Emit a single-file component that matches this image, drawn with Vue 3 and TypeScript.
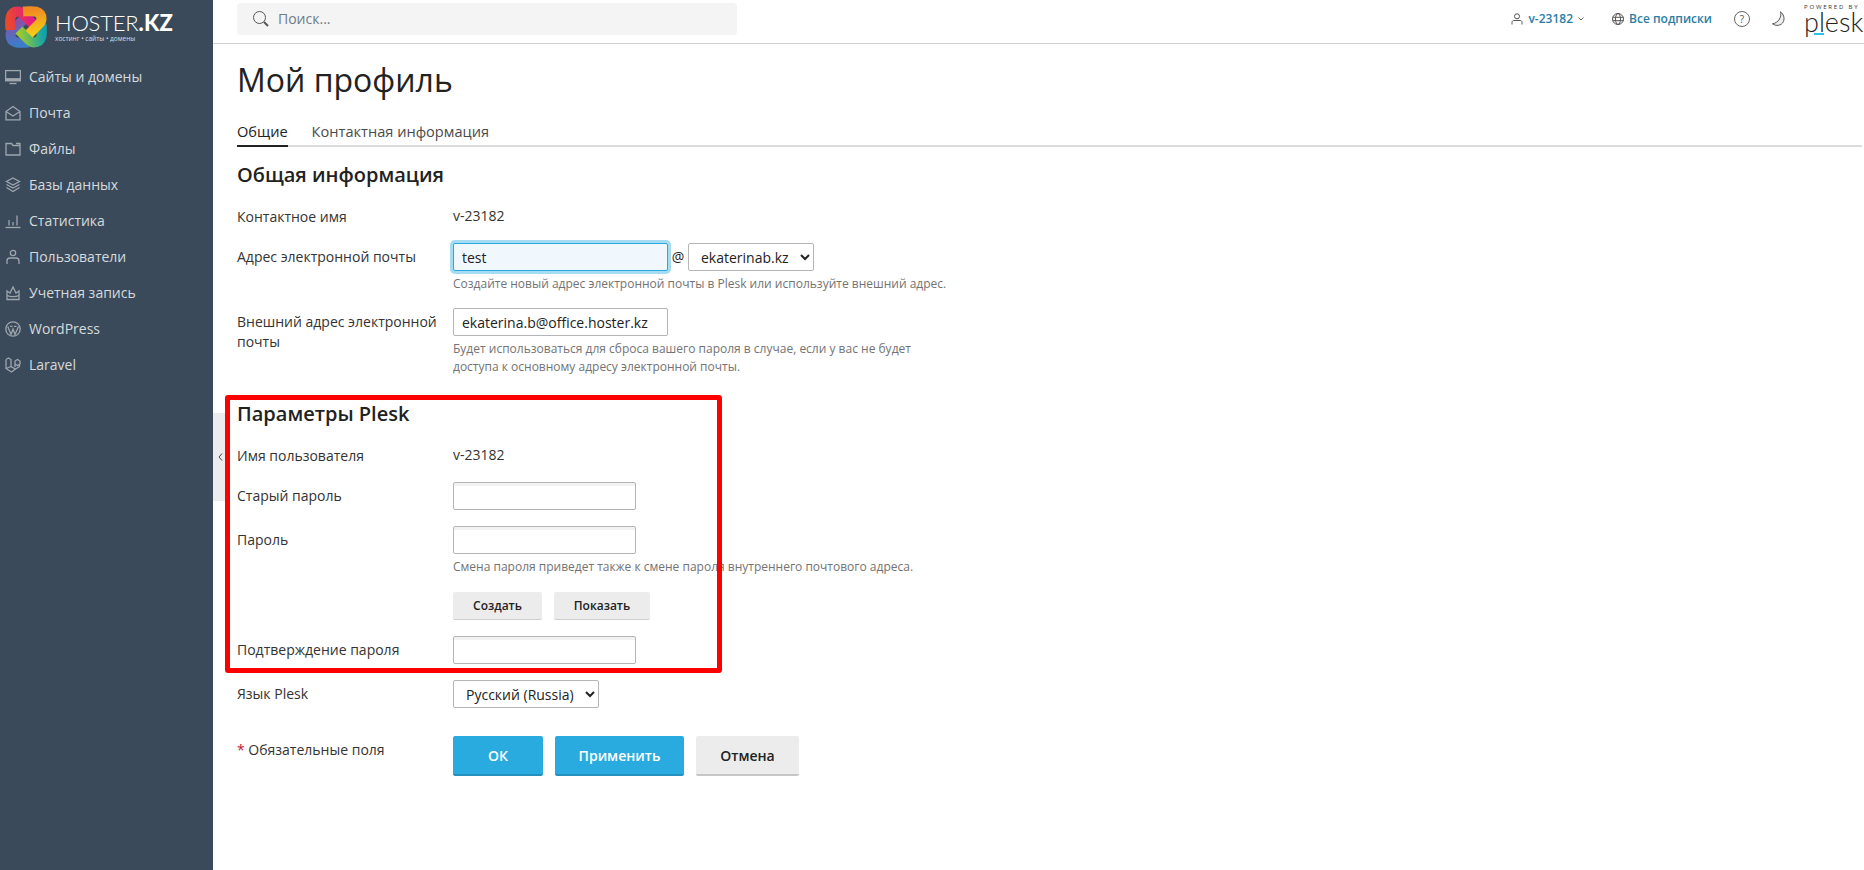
<script setup lang="ts">
import { ref } from 'vue'

const navItems: { label: string; icon: string }[] = [
  { label: 'Сайты и домены', icon: 'monitor' },
  { label: 'Почта', icon: 'mail' },
  { label: 'Файлы', icon: 'folder' },
  { label: 'Базы данных', icon: 'layers' },
  { label: 'Статистика', icon: 'chart' },
  { label: 'Пользователи', icon: 'user' },
  { label: 'Учетная запись', icon: 'crown' },
  { label: 'WordPress', icon: 'wp' },
  { label: 'Laravel', icon: 'laravel' },
]

const login = ref('test')
const externalMail = ref('ekaterina.b@office.hoster.kz')
const band = 'M18 5.500C26 5 36.500 3.500 36.500 13C36.500 15 35 17 34 18L24 28'
</script>

<template>
  <div class="page">
    <aside class="sidebar">
      <div class="brand">
        <svg class="brand-mark" viewBox="0 0 42 42" width="42" height="42">
          <defs>
            <linearGradient id="bandA" gradientUnits="userSpaceOnUse" x1="24" y1="4" x2="28" y2="28">
              <stop offset="0" stop-color="#ef8a22" />
              <stop offset="1" stop-color="#f8c915" />
            </linearGradient>
            <linearGradient id="bandB" gradientUnits="userSpaceOnUse" x1="24" y1="4" x2="28" y2="28">
              <stop offset="0" stop-color="#10a3ad" />
              <stop offset="1" stop-color="#9ccb2b" />
            </linearGradient>
            <linearGradient id="bandC" gradientUnits="userSpaceOnUse" x1="24" y1="4" x2="28" y2="28">
              <stop offset="0" stop-color="#3c7dcb" />
              <stop offset="1" stop-color="#8a4fa8" />
            </linearGradient>
            <linearGradient id="bandD" gradientUnits="userSpaceOnUse" x1="24" y1="4" x2="28" y2="28">
              <stop offset="0" stop-color="#e9482c" />
              <stop offset="1" stop-color="#e2188c" />
            </linearGradient>
          </defs>
          <g fill="none" stroke-width="10">
            <path :d="band" stroke="url(#bandC)" transform="rotate(180 21 21)" />
            <path :d="band" stroke="url(#bandB)" transform="rotate(90 21 21)" />
            <path :d="band" stroke="url(#bandD)" transform="rotate(270 21 21)" />
            <path :d="band" stroke="url(#bandA)" />
          </g>
        </svg>
        <div class="brand-text">
          <div class="brand-name">HOSTER<b>.KZ</b></div>
          <div class="brand-sub">хостинг • сайты • домены</div>
        </div>
      </div>
      <nav class="nav">
        <a v-for="item in navItems" :key="item.label" class="nav-item">
          <svg class="nav-icon" viewBox="0 0 16 16" width="16" height="16" fill="none" stroke="currentColor" stroke-width="1.300">
            <template v-if="item.icon === 'monitor'">
              <rect x="0.600" y="1.600" width="14.800" height="10" />
              <rect x="0.600" y="9.800" width="14.800" height="1.800" fill="currentColor" />
              <path d="M4.500 14.500h7" stroke-width="1.400" />
            </template>
            <template v-else-if="item.icon === 'mail'">
              <path d="M1 6.500L8 1.500L15 6.500V14.800H1Z" />
              <path d="M1 6.500L8 11L15 6.500" />
            </template>
            <template v-else-if="item.icon === 'folder'">
              <path d="M1 2.500H6.500L8 4.500H15V14H1Z" />
              <path d="M11 2.500H15V4" />
            </template>
            <template v-else-if="item.icon === 'layers'">
              <path d="M8 1L14.500 4.500L8 8L1.500 4.500Z" />
              <path d="M1.500 7.500L8 11L14.500 7.500" />
              <path d="M1.500 10.500L8 14.500L14.500 10.500" />
            </template>
            <template v-else-if="item.icon === 'chart'">
              <path d="M0.500 14.500H15.500" />
              <path d="M4 12.500V7M8 12.500V9M12 12.500V2.500" stroke-width="1.300" />
            </template>
            <template v-else-if="item.icon === 'user'">
              <circle cx="8" cy="4" r="2.700" />
              <path d="M2 15V12C2 10 3.500 9 5 9H11C12.500 9 14 10 14 12V15" />
            </template>
            <template v-else-if="item.icon === 'crown'">
              <path d="M2 6L5 8L8 2L11 8L14 6V14.500H2Z" />
              <path d="M2 10.500C5 12 11 12 14 10.500" />
            </template>
            <template v-else-if="item.icon === 'wp'">
              <circle cx="8" cy="8" r="7.200" />
              <path d="M2.800 5.500L6 13.500L8 8L10 13.500L13.500 5.500M5 5.300H7.500M9 5.300H11.500" />
            </template>
            <template v-else>
              <path d="M1 2.500L3.500 1L6 2.500V9.500L10.500 12L14.500 9.500V7" />
              <path d="M1 2.500V11.500L6.500 15L10.500 12M1 11.500L6 9.500" />
              <path d="M10 7L12.500 8.500L15 7V4L12.500 2.500L10 4ZM10 4V10" />
            </template>
          </svg>
          <span>{{ item.label }}</span>
        </a>
      </nav>
    </aside>

    <div class="workspace">
      <header class="topbar">
        <div class="search">
          <svg viewBox="0 0 16 16" width="16" height="16" fill="none" stroke="#555" stroke-width="1">
            <circle cx="6.500" cy="6.500" r="6" />
            <path d="M11 11L15 15" stroke-width="2" />
          </svg>
          <span>Поиск...</span>
        </div>
        <div class="top-actions">
          <a class="top-link user-link">
            <svg viewBox="0 0 12 12" width="12" height="12" fill="none" stroke="#555" stroke-width="1">
              <circle cx="6" cy="3.300" r="2.500" />
              <path d="M1 11.500V9.500C1 8 2 7.500 3 7.500H9C10 7.500 11 8 11 9.500V11.500" />
            </svg>
            <span>v-23182</span>
            <svg viewBox="0 0 6 4" width="6" height="4" fill="none" stroke="#666" stroke-width="1"><path d="M0.500 0.500L3 3L5.500 0.500" /></svg>
          </a>
          <a class="top-link subs-link">
            <svg viewBox="0 0 12 12" width="12" height="12" fill="none" stroke="#555" stroke-width="1">
              <circle cx="6" cy="6" r="5.500" />
              <ellipse cx="6" cy="6" rx="2.500" ry="5.500" />
              <path d="M0.500 4.300H11.500M0.500 7.700H11.500" />
            </svg>
            <span>Все подписки</span>
          </a>
          <span class="help">?</span>
          <svg class="moon" viewBox="0 0 14 16" width="14" height="16" fill="none" stroke="#555" stroke-width="1">
            <path d="M9.500 0.800C11 5.500 7.500 12 1.500 12.800C5 15.500 10.500 14.800 12.500 10.500C13.800 7 12.500 3 9.500 0.800Z" fill="#eee" />
          </svg>
          <div class="plesk-logo">
            <span class="powered">POWERED BY</span>
            <span class="plesk-word">plesk</span>
            <i class="plesk-bar"></i>
          </div>
        </div>
      </header>

      <main class="content">
        <button class="collapse" type="button" aria-label="Свернуть">
          <svg viewBox="0 0 5 8" width="5" height="8" fill="none" stroke="#444" stroke-width="1"><path d="M4 0.500L1 4L4 7.500" /></svg>
        </button>

        <h1 class="title">Мой профиль</h1>
        <div class="tabs">
          <a class="tab active">Общие</a>
          <a class="tab">Контактная информация</a>
        </div>

        <h2 class="section-title first">Общая информация</h2>

        <div class="row plain contact-row">
          <label>Контактное имя</label>
          <div class="value">v-23182</div>
        </div>

        <div class="row email-row">
          <label>Адрес электронной почты</label>
          <div>
            <div class="email-line">
              <input v-model="login" class="field focus" type="text" />
              <span class="at">@</span>
              <select class="select domain"><option>ekaterinab.kz</option></select>
            </div>
            <p class="hint">Создайте новый адрес электронной почты в Plesk или используйте внешний адрес.</p>
          </div>
        </div>

        <div class="row external-row">
          <label>Внешний адрес электронной почты</label>
          <div>
            <input v-model="externalMail" class="field" type="text" />
            <p class="hint narrow">Будет использоваться для сброса вашего пароля в случае, если у вас не будет доступа к основному адресу электронной почты.</p>
          </div>
        </div>

        <section class="plesk-section">
          <h2 class="section-title">Параметры Plesk</h2>

          <div class="row plain name-row">
            <label>Имя пользователя</label>
            <div class="value">v-23182</div>
          </div>

          <div class="row gap16">
            <label>Старый пароль</label>
            <input class="field pass" type="password" />
          </div>

          <div class="row gap16">
            <label>Пароль</label>
            <div>
              <input class="field pass" type="password" />
              <p class="hint">Смена пароля приведет также к смене пароля внутреннего почтового адреса.</p>
              <div class="small-buttons">
                <button class="btn-small create" type="button">Создать</button>
                <button class="btn-small show" type="button">Показать</button>
              </div>
            </div>
          </div>

          <div class="row gap16">
            <label>Подтверждение пароля</label>
            <input class="field pass" type="password" />
          </div>

          <div class="highlight"></div>
        </section>

        <div class="row gap16">
          <label>Язык Plesk</label>
          <div><select class="select lang"><option>Русский (Russia)</option></select></div>
        </div>

        <div class="row actions-row">
          <label><span class="star">*</span> Обязательные поля</label>
          <div class="actions">
            <button class="btn primary ok" type="button">ОК</button>
            <button class="btn primary apply" type="button">Применить</button>
            <button class="btn cancel" type="button">Отмена</button>
          </div>
        </div>
      </main>
    </div>
  </div>
</template>

<style scoped>
.page {
  display: flex;
  height: 870px;
  overflow: hidden;
  background: #fff;
  color: #222;
  font-family: "Open Sans", "Noto Sans", sans-serif;
  font-size: 14px;
  line-height: 20px;
}

.sidebar {
  flex: 0 0 213px;
  background: #3a4a5a;
  color: #d6dade;
}
.brand {
  display: flex;
  align-items: center;
  height: 54px;
  padding: 0 0 0 5px;
  gap: 8px;
}
.brand-mark { flex: none; }
.brand-text { color: #fff; margin-top: 0; }
.brand-name {
  font-family: "Lato", sans-serif;
  font-size: 22px;
  font-weight: 300;
  line-height: 22px;
  letter-spacing: -0.2px;
  white-space: nowrap;
}
.brand-name b { font-weight: 900; letter-spacing: 0.3px; }
.brand-sub {
  font-size: 6.500px;
  line-height: 8px;
  color: #d8dce0;
  white-space: nowrap;
  margin-top: 1px;
}
.nav { display: flex; flex-direction: column; padding-top: 5px; }
.nav-item {
  display: flex;
  align-items: center;
  height: 36px;
  padding-left: 5px;
  gap: 8px;
  font-size: 14px;
  white-space: nowrap;
}
.nav-icon { color: #9ea6ae; flex: none; }

.workspace { flex: 1; display: flex; flex-direction: column; min-width: 0; }

.topbar {
  display: flex;
  align-items: center;
  justify-content: space-between;
  flex: 0 0 44px;
  box-sizing: border-box;
  border-bottom: 1px solid #d2d2d2;
  padding: 0 2px 6px 24px;
}
.search {
  display: flex;
  align-items: center;
  width: 500px;
  height: 32px;
  box-sizing: border-box;
  padding-left: 16px;
  gap: 9px;
  background: #f4f4f4;
  border-radius: 4px;
  color: #6f7b88;
  font-size: 14px;
}
.top-actions { display: flex; align-items: center; font-size: 12px; }
.top-link {
  display: flex;
  align-items: center;
  gap: 5px;
  color: #2a7ea6;
  font-weight: 600;
  white-space: nowrap;
}
.user-link { margin-right: 28px; }
.subs-link { margin-right: 22px; }
.help {
  width: 14px;
  height: 14px;
  border: 1px solid #666;
  border-radius: 50%;
  font-size: 10px;
  line-height: 14px;
  text-align: center;
  color: #555;
  margin-right: 21px;
}
.moon { margin-right: 19px; }
.plesk-logo {
  position: relative;
  display: flex;
  flex-direction: column;
  box-sizing: border-box;
  width: 58px;
  height: 34px;
  padding-top: 2px;
}
.powered {
  font-size: 6px;
  line-height: 7px;
  letter-spacing: 1.800px;
  color: #333;
  white-space: nowrap;
}
.plesk-word {
  font-family: "Lato", sans-serif;
  font-size: 27px;
  line-height: 22px;
  font-weight: 300;
  color: #222;
}
.plesk-bar {
  position: absolute;
  left: 10px;
  top: 31px;
  width: 10px;
  height: 2px;
  background: #2fc1e6;
}

.content {
  position: relative;
  flex: 1;
  padding: 16px 2px 0 24px;
}
.collapse {
  position: absolute;
  left: 0;
  top: 369px;
  width: 13px;
  height: 88px;
  border: 0;
  padding: 0 0 0 5px;
  background: #ececec;
  display: flex;
  align-items: center;
}
.title {
  margin: 0;
  font-size: 32px;
  font-weight: 400;
  line-height: 40px;
  color: #222;
}
.tabs {
  display: flex;
  gap: 24px;
  height: 29px;
  margin-top: 18px;
  box-sizing: border-box;
  border-bottom: 2px solid #dcdcdc;
}
.tab {
  color: #4b4b4b;
  height: 29px;
  box-sizing: border-box;
  padding-top: 3px;
  font-size: 14.600px;
}
.tab.active {
  color: #222;
  border-bottom: 2px solid #222;
}
.section-title {
  margin: 24px 0 0;
  font-size: 20px;
  font-weight: 600;
  line-height: 28px;
  color: #222;
}
.section-title.first { margin-top: 14px; }

.row {
  display: grid;
  grid-template-columns: 216px 1fr;
}
.row > label {
  display: block;
  padding-top: 4px;
  font-size: 14px;
  color: #333;
}
.row.plain > label { padding-top: 1px; }
.value { color: #333; }
.contact-row { margin-top: 17px; }
.email-row { margin-top: 16px; }
.external-row { margin-top: 15px; }
.name-row { margin-top: 17px; }
.gap16 { margin-top: 16px; }
.actions-row { margin-top: 28px; }

.field {
  display: block;
  box-sizing: border-box;
  width: 215px;
  height: 28px;
  padding: 0 8px;
  margin: 0;
  border: 1px solid #b5b5b5;
  border-radius: 2px;
  background: #fff;
  font: 14px/20px "Open Sans", sans-serif;
  color: #222;
  outline: none;
}
.field.pass {
  width: 183px;
  box-shadow: inset 0 3px 0 #f2f2f2;
}
.field.focus {
  background: #f1f8fd;
  border-color: #28aade;
  box-shadow: 0 0 0 3px #a6dcf3;
}
.email-line { display: flex; align-items: center; }
.at { width: 20px; text-align: center; }
.select {
  box-sizing: border-box;
  height: 28px;
  border: 1px solid #b5b5b5;
  border-radius: 2px;
  background: #fff;
  font: 14px/20px "Open Sans", sans-serif;
  color: #222;
  padding: 0 0 0 8px;
}
.select.domain { width: 126px; }
.select.lang { width: 146px; }
.hint {
  margin: 4px 0 0;
  font-size: 12px;
  line-height: 18px;
  color: #737373;
  white-space: nowrap;
}
.hint.narrow { white-space: normal; width: 500px; }

.plesk-section { position: relative; }
.highlight {
  position: absolute;
  left: -12px;
  top: -5px;
  width: 497px;
  height: 278px;
  box-sizing: border-box;
  border: 5px solid #fe0000;
  border-radius: 3px;
  pointer-events: none;
}
.small-buttons { display: flex; gap: 12px; margin-top: 16px; }
.btn-small {
  height: 28px;
  box-sizing: border-box;
  border: 0;
  border-bottom: 1px solid #cfcfcf;
  border-radius: 2px;
  background: #ececec;
  color: #222;
  font: 600 12px/20px "Open Sans", sans-serif;
  padding: 0;
}
.btn-small.create { width: 89px; }
.btn-small.show { width: 96px; }
.actions { display: flex; gap: 12px; }
.btn {
  height: 40px;
  box-sizing: border-box;
  border: 0;
  border-radius: 2px;
  font: 600 14px/20px "Open Sans", sans-serif;
  padding: 2px 0 0;
}
.btn.primary { background: #29abe0; color: #fff; border-bottom: 2px solid #2590bd; }
.btn.ok { width: 90px; }
.btn.apply { width: 129px; }
.btn.cancel { width: 103px; background: #ececec; color: #222; border-bottom: 2px solid #c6c6c6; }
.star { color: #c8102e; }
</style>
